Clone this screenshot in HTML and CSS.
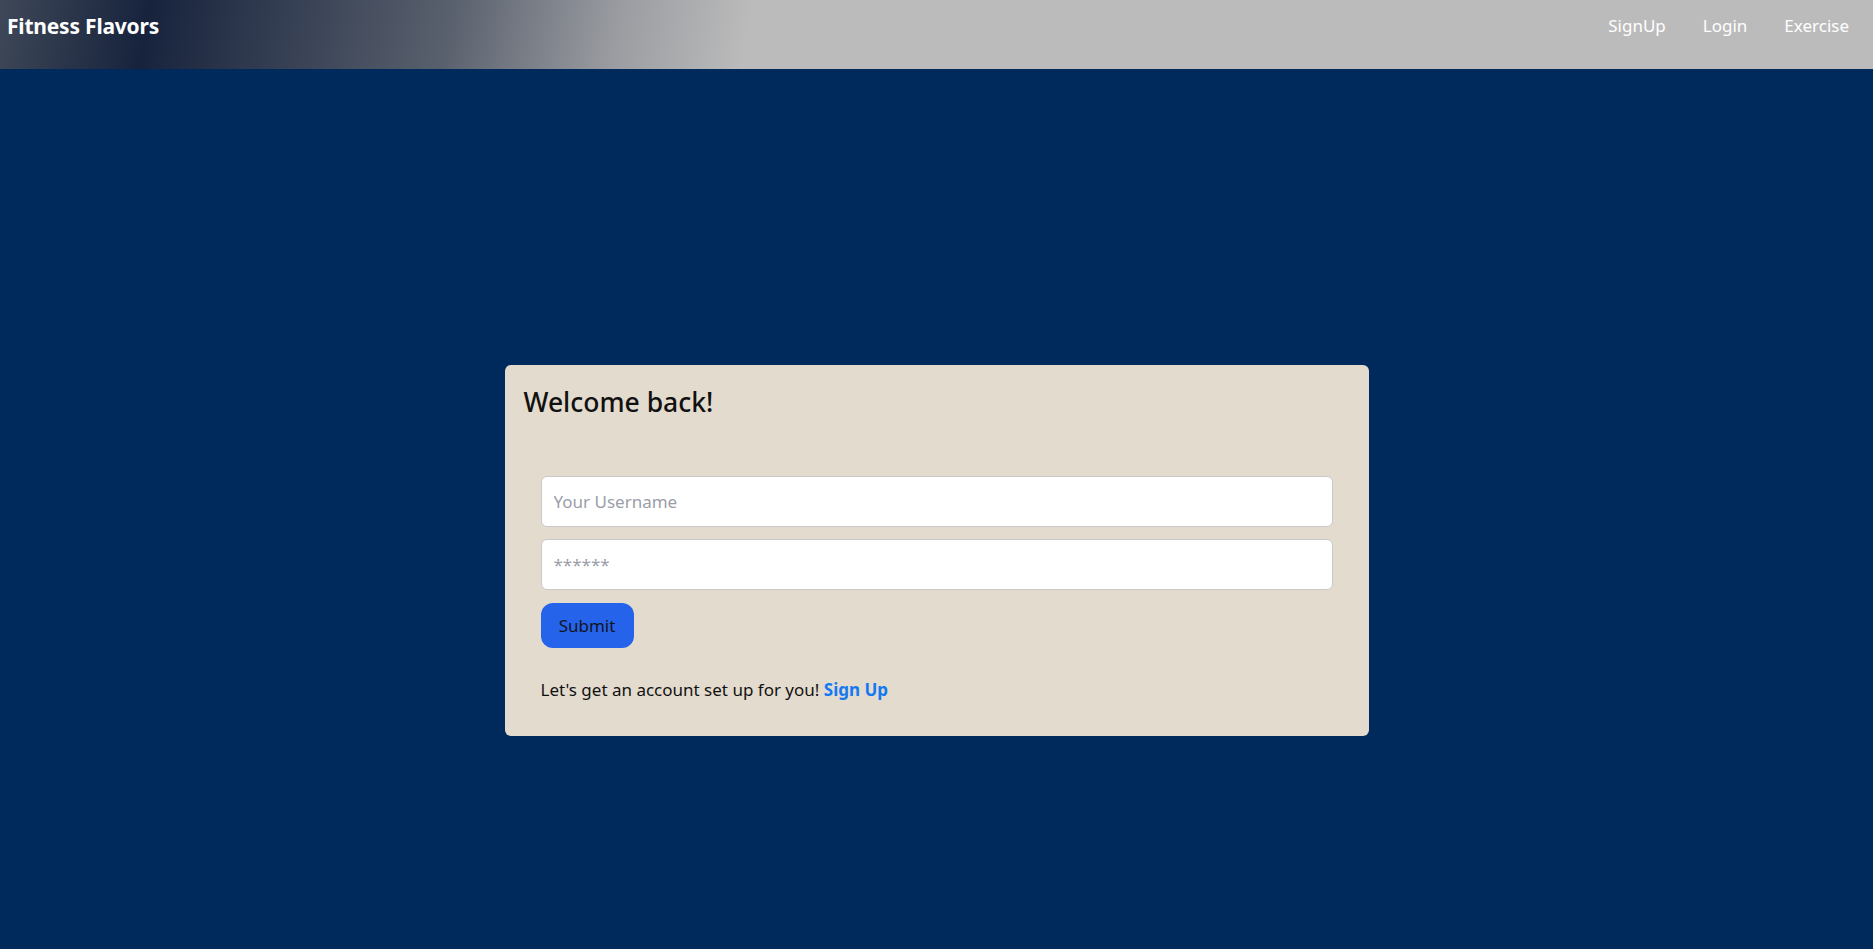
FILE: index.html
```html
<!DOCTYPE html>
<html lang="en">
<head>
<meta charset="utf-8">
<title>Fitness Flavors</title>
<link rel="stylesheet" href="styles.css">
</head>
<body>
<header class="navbar">
  <a class="brand" href="#">Fitness Flavors</a>
  <nav class="nav">
    <a class="nav-link" href="#">SignUp</a>
    <a class="nav-link" href="#">Login</a>
    <a class="nav-link" href="#">Exercise</a>
  </nav>
</header>
<main class="page">
  <section class="card">
    <h3 class="card-title">Welcome back!</h3>
    <form class="form">
      <input class="field" type="text" placeholder="Your Username">
      <input class="field" type="password" placeholder="******">
      <button class="submit" type="button">Submit</button>
      <p class="hint">Let's get an account set up for you! <a class="hint-link" href="#">Sign Up</a></p>
    </form>
  </section>
</main>
</body>
</html>
```
FILE: styles.css
```css
* { box-sizing: border-box; }
html, body { margin: 0; padding: 0; }
body {
  background: #002a5c;
  font-family: "Noto Sans", "Open Sans", sans-serif;
  min-height: 100vh;
}
.navbar {
  height: 69px;
  display: flex;
  align-items: flex-start;
  justify-content: space-between;
  padding: 0 24px 0 7px;
  background: linear-gradient(100deg, #3e4858 0%, #17233d 8%, #59606d 24%, #9a9ca1 33%, #bbbbbb 40%, #bbbbbb 100%);
}
.brand {
  color: #fff;
  font-weight: 700;
  font-size: 21px;
  text-decoration: none;
  line-height: 52px;
  letter-spacing: -0.2px;
}
.nav { display: flex; gap: 37px; }
.nav-link {
  color: #fff;
  text-decoration: none;
  font-size: 17px;
  line-height: 52px;
}
.page { padding-top: 296px; }
.card {
  width: 864px;
  margin: 0 auto;
  background: #e3dbce;
  border-radius: 6px;
  padding: 22px 18px 35px;
}
.card-title {
  margin: 0 0 57px 1px;
  font-size: 26.5px;
  font-weight: 500;
  line-height: 1.2;
  color: #111;
}
.form { padding: 0 18px; display: flex; flex-direction: column; align-items: flex-start; }
.field {
  width: 100%;
  height: 51px;
  border: 1px solid #c9c9c9;
  border-radius: 6px;
  background: #fff;
  padding: 0 12px;
  font-family: inherit;
  font-size: 17px;
  margin-bottom: 12px;
}
.field::placeholder { color: #9b9ea8; }
.submit {
  margin-top: 1px;
  height: 45px;
  width: 93px;
  border: none;
  border-radius: 12px;
  background: #2563eb;
  color: #14141c;
  font-family: inherit;
  font-size: 17px;
  padding: 0;
}
.hint {
  margin: 30px 0 0;
  font-size: 17px;
  color: #111;
}
.hint-link { color: #1479f0; font-weight: 700; text-decoration: none; }
```
